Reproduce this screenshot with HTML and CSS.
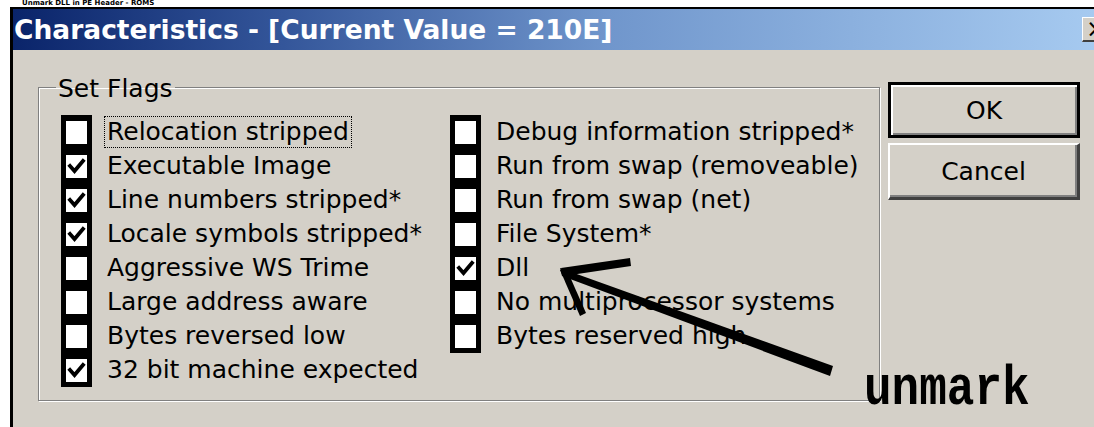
FILE: index.html
```html
<!DOCTYPE html>
<html lang="en">
<head>
<meta charset="utf-8">
<title>Characteristics</title>
<link rel="stylesheet" href="styles.css">
</head>
<body>
  <h1 class="heading">Unmark DLL in PE Header - ROMS</h1>

  <div class="dialog">
    <div class="titlebar">
      <span class="title">Characteristics - [Current Value = 210E]</span>
      <span class="close">×</span>
    </div>

    <div class="dialog-body">
      <fieldset class="group">
        <legend class="group-label">Set Flags</legend>
        <div class="flags">
          <div class="flag-col">
            <label class="flag"><span class="box"></span><span class="text focused">Relocation stripped</span></label>
            <label class="flag"><span class="box checked"></span><span class="text">Executable Image</span></label>
            <label class="flag"><span class="box checked"></span><span class="text">Line numbers stripped*</span></label>
            <label class="flag"><span class="box checked"></span><span class="text">Locale symbols stripped*</span></label>
            <label class="flag"><span class="box"></span><span class="text">Aggressive WS Trime</span></label>
            <label class="flag"><span class="box"></span><span class="text">Large address aware</span></label>
            <label class="flag"><span class="box"></span><span class="text">Bytes reversed low</span></label>
            <label class="flag"><span class="box checked"></span><span class="text">32 bit machine expected</span></label>
          </div>
          <div class="flag-col">
            <label class="flag"><span class="box"></span><span class="text">Debug information stripped*</span></label>
            <label class="flag"><span class="box"></span><span class="text">Run from swap (removeable)</span></label>
            <label class="flag"><span class="box"></span><span class="text">Run from swap (net)</span></label>
            <label class="flag"><span class="box"></span><span class="text">File System*</span></label>
            <label class="flag"><span class="box checked"></span><span class="text">Dll</span></label>
            <label class="flag"><span class="box"></span><span class="text">No multiprocessor systems</span></label>
            <label class="flag"><span class="box"></span><span class="text">Bytes reserved high</span></label>
          </div>
        </div>
      </fieldset>

      <div class="buttons">
        <button class="btn btn-default" type="button">OK</button>
        <button class="btn" type="button">Cancel</button>
      </div>
    </div>
  </div>

  <!-- hand-drawn note pointing at the Dll flag -->
  <svg class="arrow" width="1094" height="427" viewBox="0 0 1094 427" aria-hidden="true">
    <polygon points="560,268 833,366 830,376 562,276" fill="#000"/>
    <polygon points="561,268 630,258 631,266 564,276" fill="#000"/>
    <polygon points="560,270 567,270 586,313 580,316" fill="#000"/>
  </svg>
  <span class="note">unmark</span>
</body>
</html>
```

FILE: styles.css
```css
html, body {
  margin: 0;
  padding: 0;
}

html {
  overflow: hidden;
}

body {
  width: 1094px;
  height: 427px;
  overflow: hidden;
  background: #fff;
  position: relative;
}

/* page heading sits in the thin band above the dialog */
.heading {
  margin: 0;
  height: 7px;
  padding-left: 22px;
  font-family: "DejaVu Sans", sans-serif;
  font-weight: bold;
  font-size: 7px;
  line-height: 7px;
  white-space: nowrap;
  color: #000;
}

.dialog {
  height: 418px;
  margin-left: 10px;
  background: #d4d0c8;
  border-left: 3px solid #000;
  border-top: 2px solid #000;
  font-family: "DejaVu Sans", sans-serif;
  color: #000;
  overflow: hidden;
}

.titlebar {
  height: 41px;
  display: flex;
  align-items: center;
  background: linear-gradient(to right, #0a246a 0%, #34569a 25%, #7096cc 55%, #a6caf0 100%);
}

.title {
  padding-left: 1px;
  font-size: 26.5px;
  font-weight: bold;
  color: #fff;
  white-space: nowrap;
}

.close {
  margin-left: auto;
  margin-right: -16px;
  width: 28px;
  height: 25px;
  box-sizing: border-box;
  background: #d4d0c8;
  border-top: 1px solid #fff;
  border-left: 1px solid #fff;
  border-bottom: 2px solid #404040;
  font-size: 24px;
  line-height: 22px;
  padding-left: 3px;
  color: #000;
}

.dialog-body {
  display: flex;
  align-items: flex-start;
  padding: 20px 0 0 25px;
}

.group {
  margin: 0;
  width: 842px;
  height: 331px;
  box-sizing: border-box;
  padding: 11px 0 0 22px;
  border: 1px solid #808080;
  box-shadow: 1px 1px 0 #fff, inset 1px 1px 0 #fff;
}

.group-label {
  margin-left: -5px;
  padding: 4px 2px 0;
  font-size: 25px;
  line-height: 30px;
}

.flags {
  display: grid;
  grid-template-columns: 389px auto;
}

.flag {
  height: 34px;
  display: flex;
  align-items: center;
  font-size: 25px;
  white-space: nowrap;
}

.box {
  width: 31px;
  height: 34px;
  box-sizing: border-box;
  flex: none;
  background: #fff;
  border-style: solid;
  border-color: #000;
  border-width: 6px 5px 5px 5px;
  margin-right: 13px;
  position: relative;
}

.box.checked::after {
  content: "";
  position: absolute;
  left: 1px;
  top: 2px;
  width: 19px;
  height: 19px;
  background: no-repeat center / contain url("data:image/svg+xml,%3Csvg xmlns='http://www.w3.org/2000/svg' viewBox='0 0 19 19'%3E%3Cpath d='M3 9 L7.5 14 L16 4' fill='none' stroke='%23000' stroke-width='3.8' stroke-linecap='square'/%3E%3C/svg%3E");
}

.text {
  padding: 1px 2px;
  line-height: 28px;
}

.text.focused {
  outline: 1px dotted #000;
  outline-offset: 0;
}

.buttons {
  margin-left: 8px;
  margin-top: 12px;
  display: flex;
  flex-direction: column;
  gap: 5px;
}

.btn {
  width: 192px;
  height: 57px;
  margin: 0;
  padding: 0;
  font-family: "DejaVu Sans", sans-serif;
  font-size: 25px;
  color: #000;
  background: #d4d0c8;
  border-style: solid;
  border-width: 2px 3px 3px 2px;
  border-color: #fff #404040 #404040 #fff;
  box-shadow: inset -2px -2px 0 #808080;
}

.btn-default {
  border: 3px solid #000;
  box-shadow: inset 2px 2px 0 #fff, inset -2px -2px 0 #808080;
  height: 56px;
}

.arrow {
  position: absolute;
  left: 0;
  top: 0;
  pointer-events: none;
}

.note {
  position: absolute;
  left: 864px;
  top: 370px;
  font-family: "Liberation Mono", monospace;
  font-weight: bold;
  font-size: 46px;
  line-height: 50px;
  color: #000;
  transform: scaleY(1.2);
  transform-origin: bottom left;
}
```
